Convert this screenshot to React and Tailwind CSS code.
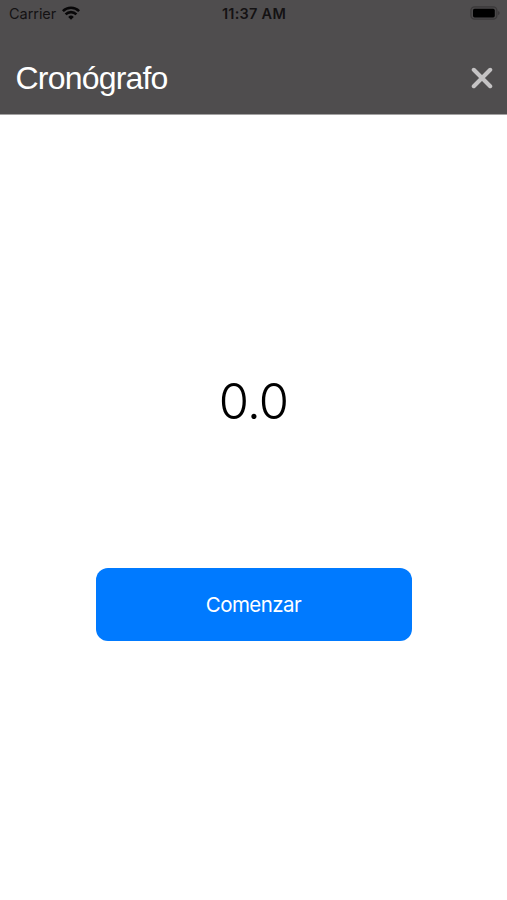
import React from 'react';

const WifiIcon = () => (
  <svg className="w-[18px] h-[14px]" viewBox="0 0 18 14" fill="none" stroke="#080708" strokeWidth="2.6">
    <path d="M0.9 5.1a11.6 11.6 0 0 1 16.2 0" />
    <path d="M3.6 8.4a7.6 7.6 0 0 1 10.8 0" />
    <path d="M9 13.8l-2.8-2.9a4 4 0 0 1 5.6 0z" fill="#080708" stroke="none" />
  </svg>
);

const BatteryIcon = () => (
  <svg className="w-[30px] h-[14px]" viewBox="0 0 30 14">
    <rect x="0.9" y="0.9" width="26" height="12.2" rx="3.6" fill="#4b494a" stroke="#3b393a" strokeWidth="1.3" />
    <rect x="3" y="2.8" width="21.8" height="8.6" rx="1.6" fill="#000" />
    <path d="M28.4 5v4.2c1.4-.6 1.4-3.6 0-4.2z" fill="#302e2f" />
  </svg>
);

const CloseIcon = () => (
  <svg className="w-[22px] h-[22px]" viewBox="0 0 22 22" stroke="#c5c3c4" strokeWidth="4.1" strokeLinecap="round">
    <path d="M2.8 2.8l16.4 16.4M19.2 2.8l-16.4 16.4" />
  </svg>
);

const StatusBar = () => (
  <div className="grid grid-cols-3 items-center h-7 pl-[9px] pr-[7px] text-[#141213]">
    <div className="flex items-center gap-[6px]">
      <span className="text-[14.5px] leading-none tracking-[-0.05px]">Carrier</span>
      <span className="-mt-[3px]"><WifiIcon /></span>
    </div>
    <span className="-ml-[1px] text-center text-[14.5px] leading-none font-semibold tracking-[0.25px]">11:37 AM</span>
    <div className="flex justify-end -mt-[2px]">
      <BatteryIcon />
    </div>
  </div>
);

const Header = ({ title, onClose }) => (
  <header className="h-[115px] bg-[#4f4d4e] border-b border-[#a3a2a2]">
    <StatusBar />
    <div className="flex items-center justify-between h-[100px] pl-[15.5px] pr-[14px]">
      <h1 className="font-['Liberation_Sans',sans-serif] text-[32px] leading-none tracking-[-0.8px] text-white">
        {title}
      </h1>
      <button type="button" aria-label="Cerrar" onClick={onClose}>
        <CloseIcon />
      </button>
    </div>
  </header>
);

const App = () => (
  <div className="flex flex-col h-screen overflow-hidden bg-white font-[Inter,sans-serif]">
    <Header title="Cronógrafo" />
    <main className="flex flex-col items-center pt-[263px]">
      <p className="text-[49px] leading-[48px] font-light tracking-[-0.8px] text-black">0.0</p>
      <button
        type="button"
        className="mt-[142px] w-[316px] h-[73px] pt-[2px] rounded-[12px] bg-[#007aff] text-[20.5px] tracking-[-0.55px] text-white"
      >
        Comenzar
      </button>
    </main>
  </div>
);

export default App;
